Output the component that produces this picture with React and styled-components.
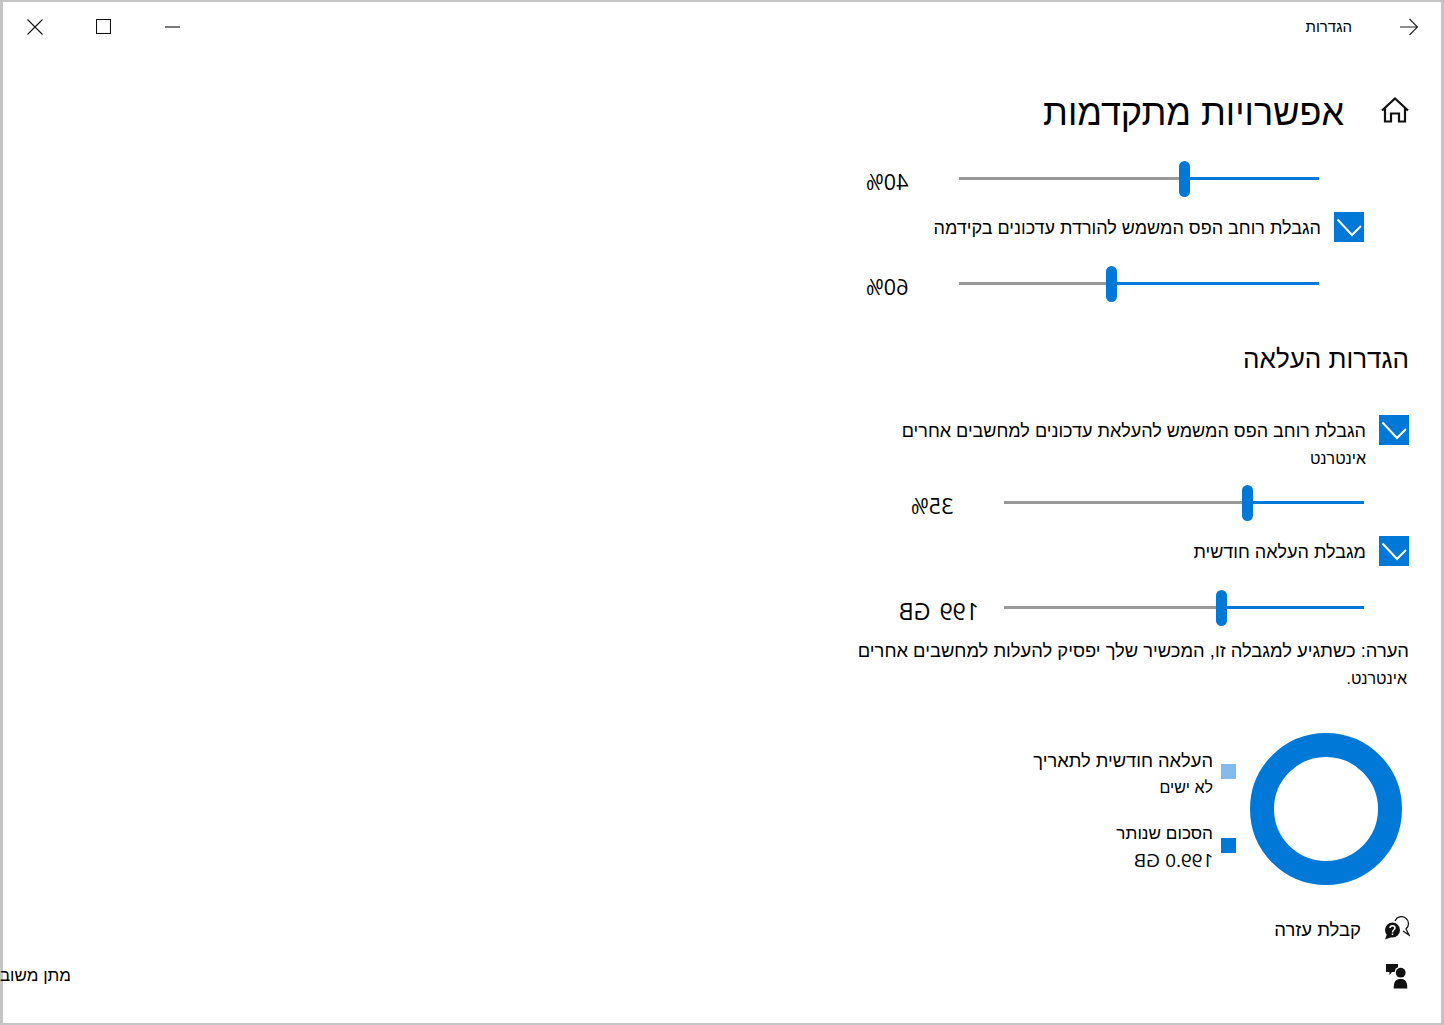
import React from "react";
import styled, { createGlobalStyle } from "styled-components";

const Global = createGlobalStyle`
  html, body { margin: 0; padding: 0; height: 100%; overflow: hidden; background: #fff; }
  body { font-family: "Liberation Sans", Arial, sans-serif; color: #000; }
`;
const Win = styled.div`
  box-sizing: border-box; width: 1444px; height: 1025px;
  border: solid #c4c4c4; border-width: 2px 3px;
  background: #fff; direction: rtl; display: flex; flex-direction: column;
`;
const TitleBar = styled.header`
  height: 50px; flex: none; display: flex; align-items: center; justify-content: space-between;
  padding-right: 23px;
`;
const Back = styled.div`display: flex; align-items: center; gap: 48px;`;
const BackLabel = styled.span`font-size: 15px; line-height: 20px; margin-left: 1px;`;
const Controls = styled.div`display: flex; margin-left: -3px; margin-bottom: 1px;`;
const Ctl = styled.div`width: 69px; height: 48px; display: flex; align-items: center; justify-content: center;`;
const Main = styled.main`flex: 1; display: flex; flex-direction: column; padding: 30px 32px 0 0; min-height: 0;`;
const TitleRow = styled.div`height: 60px; display: flex; align-items: center; gap: 37px;`;
const HomeIcon = styled.svg`margin-bottom: 4px; flex: none;`;
const Title = styled.h1`margin: 2px 0 0; font-size: 36px; font-weight: 400; line-height: 58px;`;
const Section = styled.section`display: flex; flex-direction: column; padding-right: ${p => p.$indent || 0}px;`;
const SliderRow = styled.div`
  display: flex; align-items: center; height: 36px; padding-right: 45px;
  margin-top: ${p => p.$top}px;
`;
const Rail = styled.div`width: 360px; height: 36px; display: flex; align-items: center; flex: none;`;
const Fill = styled.div`height: 3px; margin-bottom: 1px; background: #0078d7; width: ${p => p.$w}px; flex: none;`;
const Rest = styled.div`height: 3px; margin-bottom: 1px; background: #999; flex: 1;`;
const Thumb = styled.div`width: 11px; height: 36px; border-radius: 5.5px; background: #0078d7; flex: none;`;
const Value = styled.span`
  font-family: "Open Sans", "Liberation Sans", sans-serif; font-size: ${p => p.$size}px; line-height: 28px;
  word-spacing: ${p => p.$size > 22 ? 3 : 0}px;
  direction: ltr; transform: scaleX(-1); margin-top: 5px; margin-right: ${p => p.$gap}px; white-space: nowrap;
`;
const CheckRow = styled.div`display: flex; gap: 13px; margin-top: ${p => p.$top}px;`;
const Check = styled.div`width: 30px; height: 30px; background: #0078d7; flex: none; display: flex;`;
const CheckText = styled.div`font-size: 18px; line-height: 28px; padding-top: 2px;`;
const SmallLine = styled.span`display: block; font-size: 16px;`;
const Heading = styled.h2`margin: 37px 0 0; font-size: 26px; font-weight: 400; line-height: 40px;`;
const Note = styled.p`margin: 11px 0 0; font-size: 18.35px; line-height: 28px;`;
const NoteEnd = styled.span`display: block; font-size: 16px; padding-right: 2px;`;
const Usage = styled.div`display: flex; margin-top: 40px; padding-right: 7px; gap: 14px;`;
const Legend = styled.div`display: flex; flex-direction: column; gap: 19px; padding-top: 14px;`;
const LegendItem = styled.div`display: flex; gap: 8px;`;
const Swatch = styled.div`width: 15px; height: 15px; margin-top: ${p => p.$top}px; flex: none; background: ${p => p.$c};`;
const LegendText = styled.div`font-size: ${p => p.$size}px; line-height: 27px;`;
const Sub = styled.div`font-size: 16px;`;
const SubValue = styled.div`
  font-family: "Open Sans", "Liberation Sans", sans-serif; font-size: 19px; direction: ltr;
  transform: scaleX(-1); width: max-content;
`;
const LinkRow = styled.div`
  display: flex; align-items: center; height: 30px; margin-top: ${p => p.$top}px;
  justify-content: ${p => p.$spread ? "space-between" : "flex-start"}; gap: 23px; font-size: 18.5px;
`;
const HelpIcon = styled.svg`margin: 0 -1px 4px 0; flex: none;`;
const FeedbackIcon = styled.svg`margin-right: 1px; flex: none;`;
const FeedbackText = styled.span`width: 68px; white-space: nowrap; font-size: 17px;`;

const Slider = ({ fill, value, gap, top, size = 21.5 }) => (
  <SliderRow $top={top}>
    <Rail><Fill $w={fill} /><Thumb /><Rest /></Rail>
    <Value $gap={gap} $size={size}>{value}</Value>
  </SliderRow>
);
const Mark = () => (
  <svg width="30" height="30" viewBox="0 0 30 30"><path d="M3.5 7.5 L18 23 L27 14" fill="none" stroke="#fff" strokeWidth="2" /></svg>
);

export default function App() {
  return (
    <Win>
      <Global />
      <TitleBar>
        <Back>
          <svg width="18" height="18" viewBox="0 0 18 18"><path d="M0 9 H17.5 M9.5 1 L17.5 9 L9.5 17" fill="none" stroke="#222" strokeWidth="1.2" /></svg>
          <BackLabel>הגדרות</BackLabel>
        </Back>
        <Controls>
          <Ctl><svg width="15" height="2" viewBox="0 0 15 2"><path d="M0 1 H15" stroke="#111" strokeWidth="1.1" /></svg></Ctl>
          <Ctl><svg width="15" height="15" viewBox="0 0 15 15"><rect x=".5" y=".5" width="14" height="14" fill="none" stroke="#111" strokeWidth="1.1" /></svg></Ctl>
          <Ctl><svg width="16" height="16" viewBox="0 0 16 16"><path d="M.5 .5 L15.5 15.5 M15.5 .5 L.5 15.5" stroke="#111" strokeWidth="1.1" /></svg></Ctl>
        </Controls>
      </TitleBar>
      <Main>
        <TitleRow>
          <HomeIcon width="28" height="26" viewBox="0 0 28 26"><path d="M1 13.5 L14 1.5 L27 13.5 M4 11 V24.5 H10 V16.5 H18 V24.5 H24 V11" fill="none" stroke="#111" strokeWidth="2.2" /></HomeIcon>
          <Title>אפשרויות מתקדמות</Title>
        </TitleRow>
        <Section $indent={45}>
          <Slider top={19} fill={129} value="40%" gap={51} />
          <CheckRow $top={15}>
            <Check><Mark /></Check>
            <CheckText>הגבלת רוחב הפס המשמש להורדת עדכונים בקידמה</CheckText>
          </CheckRow>
          <Slider top={24} fill={202} value="60%" gap={51} />
        </Section>
        <Heading>הגדרות העלאה</Heading>
        <CheckRow $top={36}>
          <Check><Mark /></Check>
          <CheckText>הגבלת רוחב הפס המשמש להעלאת עדכונים למחשבים אחרים<SmallLine>אינטרנט</SmallLine></CheckText>
        </CheckRow>
        <Slider top={12} fill={111} value="35%" gap={51} />
        <CheckRow $top={15}>
          <Check><Mark /></Check>
          <CheckText>מגבלת העלאה חודשית</CheckText>
        </CheckRow>
        <Slider top={24} fill={137} value="199 GB" gap={25} size={23} />
        <Note>הערה: כשתגיע למגבלה זו, המכשיר שלך יפסיק להעלות למחשבים אחרים<NoteEnd>אינטרנט.</NoteEnd></Note>
        <Usage>
          <svg width="152" height="152" viewBox="0 0 152 152"><circle cx="76" cy="76" r="64" fill="none" stroke="#0078d7" strokeWidth="24" /></svg>
          <Legend>
            <LegendItem>
              <Swatch $c="#83bbec" $top={17} />
              <LegendText $size={18.3}>העלאה חודשית לתאריך<Sub>לא ישים</Sub></LegendText>
            </LegendItem>
            <LegendItem>
              <Swatch $c="#0078d7" $top={18} />
              <LegendText $size={17.2}>הסכום שנותר<SubValue>199.0 GB</SubValue></LegendText>
            </LegendItem>
          </Legend>
        </Usage>
        <LinkRow $top={30}>
          <HelpIcon width="26" height="24" viewBox="0 0 26 24">
            <path d="M11 5 A7 7 0 1 1 22 13 L25 19 L19 15" fill="none" stroke="#111" strokeWidth="1.3" />
            <circle cx="8.5" cy="14" r="8.5" fill="#fff" />
            <circle cx="8.5" cy="14" r="7.5" fill="#111" />
            <path d="M3 18 L1 23.5 L8 21 Z" fill="#111" />
            <path d="M6 12 C6 9 11 9 11 12 C11 14 8.5 13.5 8.5 16.5 M8.5 17.5 V19" fill="none" stroke="#fff" strokeWidth="1.5" />
          </HelpIcon>
          <span>קבלת עזרה</span>
        </LinkRow>
        <LinkRow $top={16} $spread>
          <FeedbackIcon width="22" height="25" viewBox="0 0 22 25">
            <path d="M0 0 H12 V8 H6 L3.5 11 V8 H0 Z" fill="#111" />
            <circle cx="14.7" cy="8.7" r="6.2" fill="#fff" />
            <circle cx="14.7" cy="8.7" r="4.9" fill="#111" />
            <path d="M7.7 24.5 C7.7 17 10 15 14.7 15 C19 15 21.3 17 21.3 24.5 Z" fill="#111" />
          </FeedbackIcon>
          <FeedbackText>מתן משוב</FeedbackText>
        </LinkRow>
      </Main>
    </Win>
  );
}
